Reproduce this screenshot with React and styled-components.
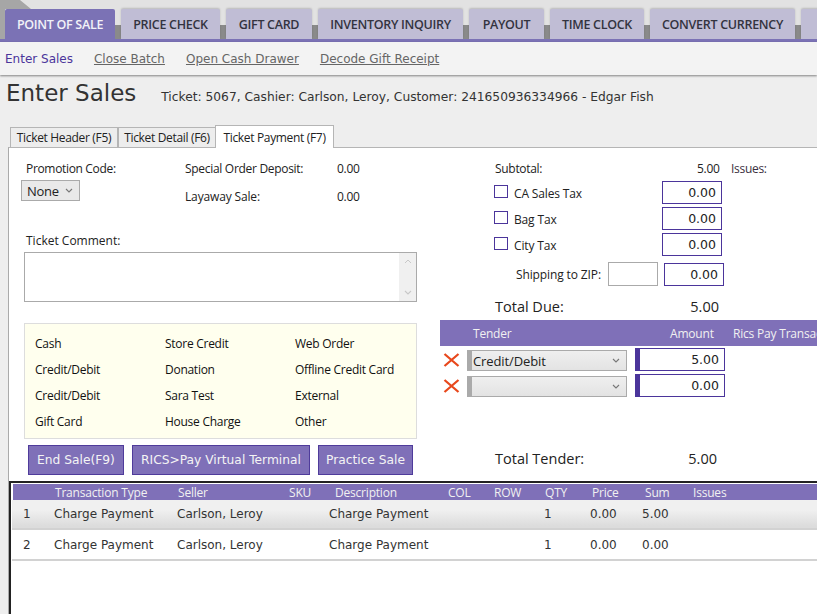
import React from 'react';
import styled, { createGlobalStyle } from 'styled-components';

const Global = createGlobalStyle`
  html, body { margin: 0; padding: 0; background: #eeeeee; }
  * { box-sizing: border-box; }
`;
const ui = `"Open Sans", "Noto Sans", sans-serif`;
const verd = `"DejaVu Sans", Verdana, sans-serif`;

const Page = styled.div`
  width: 817px; height: 614px; overflow: hidden; display: flex; flex-direction: column;
  background: #eeeeee; font-family: ${ui}; color: #222;
`;
const TopBar = styled.div`
  position: relative; height: 42px; flex: none; padding: 9px 0 0 5px; display: flex; gap: 6px;
  background: linear-gradient(#e2e2e2 0, #e2e2e2 25px, #8a8a8a 25px);
  border-bottom: 3px solid #7b72b5; overflow: hidden; white-space: nowrap;
`;
const Corner = styled.div`
  position: absolute; left: 0; top: 0; width: 32px; height: 39px;
  background: #a6a6a6; clip-path: polygon(0 0, 20px 0, 31px 9px, 5px 9px, 5px 39px, 0 39px);
`;
const MainTab = styled.div`
  position: relative; flex: none; width: ${p => p.$w}px; height: 30px; display: flex; align-items: center; justify-content: center;
  font: 600 12.5px ${ui}; letter-spacing: -0.3px;
  background: ${p => p.$active ? '#7b72b5' : '#c0bdd5'};
  color: ${p => p.$active ? '#f2f2f8' : '#33333f'};
  border-radius: 2px 2px 0 0;
  box-shadow: ${p => p.$active ? 'none' : '0 -1px 2px rgba(0,0,0,.18)'};
`;
const SubNav = styled.div`
  height: 33px; flex: none; background: #f3f3f3; display: flex; align-items: center; padding: 0 0 0 5px; gap: 21px;
  font: 12px ${verd}; box-shadow: 0 1px 2px rgba(0,0,0,.45); position: relative;
`;
const SubActive = styled.span` color: #4b359b; `;
const SubLink = styled.a` color: #666; text-decoration: underline; `;
const TitleRow = styled.div`
  height: 50px; flex: none; display: flex; align-items: baseline; padding: 5px 0 0 6px; gap: 25px;
`;
const Title = styled.h1` margin: 0; font: 400 23px ${verd}; color: #333; `;
const Info = styled.span` font: 12.25px ${verd}; color: #333; `;
const TabStrip = styled.div`
  height: 23px; flex: none; display: flex; align-items: flex-end; padding-left: 10px; position: relative; z-index: 1; margin-bottom: -1px;
`;
const SecTab = styled.div`
  height: ${p => p.$active ? 23 : 21}px; width: ${p => p.$w}px; display: flex; align-items: center; justify-content: center;
  font: 12px ${ui}; letter-spacing: -0.33px; color: #222; background: ${p => p.$active ? '#fff' : '#ededed'};
  border: 1px solid #b5b5b5; border-bottom: ${p => p.$active ? 'none' : '1px solid #b5b5b5'};
  margin-left: ${p => p.$active ? -1 : 0}px;
`;
const Panel = styled.div`
  flex: 1; min-height: 0; margin-left: 8px; background: #fff; border-left: 1px solid #aaa; border-top: 1px solid #b5b5b5;
  display: flex; flex-direction: column;
`;
const Form = styled.div` height: 333px; flex: none; display: flex; `;
const LeftCol = styled.div` width: 431px; flex: none; padding: 12px 0 0 15px; display: flex; flex-direction: column; `;
const TopFields = styled.div` display: flex; height: 69px; `;
const Promo = styled.div` width: 161px; flex: none; padding-left: 2px; `;
const Label = styled.div` font: 12px/17px ${ui}; color: #222; letter-spacing: ${p => p.$sp ?? -0.33}px; `;
const PromoSelect = styled.div`
  margin: 3px 0 0 -5px; width: 59px; height: 21px; border: 1px solid #aaa; background: #e9e9e9; display: flex; align-items: center; justify-content: space-between;
  padding: 0 6px 0 5px; font: 13px ${ui}; letter-spacing: -0.3px; color: #222;
`;
const Chevron = ({ c = '#777' }) => (
  <svg width="8" height="5" viewBox="0 0 8 5"><path d="M1 1l3 3 3-3" fill="none" stroke={c} strokeWidth="1.1" /></svg>
);
const Deposit = styled.div` display: grid; grid-template-columns: 152px 40px; grid-auto-rows: 28px; `;
const Plain = styled.div` font: 12px/17px ${ui}; letter-spacing: ${p => p.$sp ?? -0.3}px; color: #222; `;
const CommentLabel = styled(Label)` padding-left: 2px; margin-top: 3px; `;
const Comment = styled.div`
  margin-top: 3px; width: 393px; height: 50px; border: 1px solid #aaa; background: #fff; display: flex; justify-content: flex-end;
`;
const ScrollTrack = styled.div`
  width: 17px; background: #f0f0f0; display: flex; flex-direction: column; align-items: center; justify-content: space-between; padding: 6px 0;
`;
const TenderBox = styled.div`
  margin-top: 21px; width: 393px; height: 116px; border: 1px solid #ddd; background: #ffffee; padding: 6px 0 0 10px;
  display: grid; grid-template-columns: repeat(3, 130px); grid-auto-rows: 26px; align-items: center;
`;
const TenderName = styled.div` font: 12px ${ui}; letter-spacing: -0.27px; color: #111; `;
const Buttons = styled.div` margin-top: 6px; padding-left: 4px; display: flex; gap: 8px; `;
const Btn = styled.div`
  width: ${p => p.$w}px; height: 30px; background: #7f70b8; border: 1px solid #4f3b9b; color: #f4f4f4;
  display: flex; align-items: center; justify-content: center; font: 12.25px ${verd};
`;
const RightCol = styled.div` flex: 1; min-width: 0; padding-top: 12px; display: flex; flex-direction: column; `;
const SumBlock = styled.div` padding-left: 55px; height: 160px; display: flex; flex-direction: column; `;
const SubRow = styled.div` display: flex; height: 17px; font: 12px/17px ${ui}; letter-spacing: -0.3px; `;
const SubLabel = styled.span` width: 202px; `;
const SubValue = styled.span` width: 22px; text-align: right; `;
const Issues = styled.span` margin-left: 12px; color: #3a3040; `;
const TaxRow = styled.label`
  display: flex; align-items: center; height: 23px; margin-bottom: 3px; margin-left: -1px;
  &:first-of-type { margin-top: 4px; }
`;
const Check = styled.span` width: 14px; height: 13px; border: 1px solid #4b359b; background: #fff; margin: -2px 6px 0 0; flex: none; `;
const TaxName = styled.span` width: 148px; font: 12px ${ui}; letter-spacing: -0.15px; padding-top: 1px; `;
const Amount = styled.div`
  width: ${p => p.$w || 60}px; height: 23px; border: 1px solid #4b359b; ${p => p.$bar ? 'border-left-width: 5px;' : ''}
  font: 12.5px ${verd}; color: #222; display: flex; align-items: center; justify-content: flex-end; padding-right: 5px; background: #fff; flex: none;
`;
const ShipRow = styled.div` display: flex; align-items: center; height: 25px; margin: 3px 0 0 21px; `;
const ShipLabel = styled.span` width: 92px; font: 12px ${ui}; letter-spacing: -0.12px; `;
const Zip = styled.div` width: 50px; height: 24px; border: 1px solid #aaa; margin: -1px 6px 0 0; flex: none; `;
const TotalRow = styled.div` display: flex; align-items: center; height: 22px; margin-top: 8px; font: 14.5px ${ui}; color: #222; `;
const TotalLabel = styled.span` width: ${p => p.$w}px; flex: none; `;
const TotalValue = styled.span` width: ${p => p.$w}px; text-align: right; flex: none; `;
const TenderHead = styled.div`
  height: 26px; flex: none; background: #7f70b8; color: #f1f1f1; display: grid; grid-template-columns: 33px 197px 63px 1fr; align-items: center; font: 12px ${ui}; letter-spacing: -0.2px; white-space: nowrap; overflow: hidden;
`;
const TenderRow = styled.div` display: flex; align-items: center; height: 23px; margin-top: ${p => p.$first ? 2 : 3}px; padding-left: 3px; `;
const Xmark = () => (
  <svg width="17" height="14" viewBox="0 0 17 14" style={{ flex: 'none' }}>
    <path d="M1.5 1L15.5 13M15.5 1L1.5 13" stroke="#e8481c" strokeWidth="2.3" fill="none" />
  </svg>
);
const TenderSelect = styled.div`
  margin: 2px 0 0 7px; width: 160px; height: 21px; flex: none; border: 1px solid #aaa; border-left-width: 5px; background: linear-gradient(#efefef, #e3e3e3);
  display: flex; align-items: center; justify-content: space-between; padding: 0 6px 0 1px; font: 13px ${ui}; letter-spacing: -0.1px; color: #222;
`;
const AmountSlot = styled.div` margin-left: 8px; `;
const TotalTender = styled(TotalRow)` margin: 50px 0 0 55px; `;
const Grid = styled.div`
  flex: 1; min-height: 0; background: #fff; border-top: 2px solid #222; border-left: 2px solid #222; margin-left: 0; padding: 1px 0 0 2px; position: relative;
`;
const GridHead = styled.div`
  height: 16px; padding-top: 1px; background: #7f70b8; color: #f1f1f1; display: grid; grid-template-columns: 42px 123px 111px 46px 113px 46px 51px 47px 53px 48px 1fr; align-items: center; font: 12px/16px ${ui}; letter-spacing: -0.2px; white-space: nowrap;
`;
const GridRow = styled.div`
  height: ${p => p.$first ? 30 : 31}px; margin-left: -1px; display: grid; grid-template-columns: 42px 123px 111px 41px 119px 46px 50px 46px 52px 1fr; align-items: center; font: 12px ${verd}; color: #333; white-space: nowrap;
  background: ${p => p.$first ? 'linear-gradient(#f0f0f0 0, #f0f0f0 10px, #dcdcdc 26px)' : '#fff'};
  border-bottom: 2px solid #d2d2d2;
`;
const Idx = styled.span` padding-left: 11px; `;

const tabs = [['POINT OF SALE', 110], ['PRICE CHECK', 99], ['GIFT CARD', 86], ['INVENTORY INQUIRY', 145], ['PAYOUT', 75], ['TIME CLOCK', 94], ['CONVERT CURRENCY', 145], ['CUSTOMER', 97]];
const tenders = ['Cash', 'Store Credit', 'Web Order', 'Credit/Debit', 'Donation', 'Offline Credit Card', 'Credit/Debit', 'Sara Test', 'External', 'Gift Card', 'House Charge', 'Other'];
const heads = ['', 'Transaction Type', 'Seller', 'SKU', 'Description', 'COL', 'ROW', 'QTY', 'Price', 'Sum', 'Issues'];

export default function App() {
  return (
    <Page>
      <Global />
      <TopBar>
        <Corner />
        {tabs.map(([t, w], i) => <MainTab key={t} $w={w} $active={i === 0}>{t}</MainTab>)}
      </TopBar>
      <SubNav>
        <SubActive>Enter Sales</SubActive>
        <SubLink>Close Batch</SubLink>
        <SubLink>Open Cash Drawer</SubLink>
        <SubLink>Decode Gift Receipt</SubLink>
      </SubNav>
      <TitleRow>
        <Title>Enter Sales</Title>
        <Info>Ticket: 5067, Cashier: Carlson, Leroy, Customer: 241650936334966 - Edgar Fish</Info>
      </TitleRow>
      <TabStrip>
        <SecTab $w={108}>Ticket Header (F5)</SecTab>
        <SecTab $w={98}>Ticket Detail (F6)</SecTab>
        <SecTab $w={119} $active>Ticket Payment (F7)</SecTab>
      </TabStrip>
      <Panel>
        <Form>
          <LeftCol>
            <TopFields>
              <Promo>
                <Label>Promotion Code:</Label>
                <PromoSelect>None <Chevron /></PromoSelect>
              </Promo>
              <Deposit>
                <Plain>Special Order Deposit:</Plain><Plain>0.00</Plain>
                <Plain $sp={-0.15}>Layaway Sale:</Plain><Plain>0.00</Plain>
              </Deposit>
            </TopFields>
            <CommentLabel $sp={0}>Ticket Comment:</CommentLabel>
            <Comment>
              <ScrollTrack>
                <svg width="8" height="5" viewBox="0 0 8 5"><path d="M1 4l3-3 3 3" fill="none" stroke="#c8c8c8" /></svg>
                <Chevron c="#c8c8c8" />
              </ScrollTrack>
            </Comment>
            <TenderBox>{tenders.map((t, i) => <TenderName key={i}>{t}</TenderName>)}</TenderBox>
            <Buttons>
              <Btn $w={96}>End Sale(F9)</Btn>
              <Btn $w={178}>RICS&gt;Pay Virtual Terminal</Btn>
              <Btn $w={95}>Practice Sale</Btn>
            </Buttons>
          </LeftCol>
          <RightCol>
            <SumBlock>
              <SubRow>
                <SubLabel>Subtotal:</SubLabel><SubValue>5.00</SubValue><Issues>Issues:</Issues>
              </SubRow>
              {['CA Sales Tax', 'Bag Tax', 'City Tax'].map(t => (
                <TaxRow key={t}><Check /><TaxName>{t}</TaxName><Amount>0.00</Amount></TaxRow>
              ))}
              <ShipRow><ShipLabel>Shipping to ZIP:</ShipLabel><Zip /><Amount>0.00</Amount></ShipRow>
              <TotalRow><TotalLabel $w={170}>Total Due:</TotalLabel><TotalValue $w={54}>5.00</TotalValue></TotalRow>
            </SumBlock>
            <TenderHead><span /><span>Tender</span><span>Amount</span><span>Rics Pay Transaction</span></TenderHead>
            <TenderRow $first><Xmark /><TenderSelect>Credit/Debit <Chevron /></TenderSelect><AmountSlot><Amount $w={90} $bar>5.00</Amount></AmountSlot></TenderRow>
            <TenderRow><Xmark /><TenderSelect><span /><Chevron /></TenderSelect><AmountSlot><Amount $w={90} $bar>0.00</Amount></AmountSlot></TenderRow>
            <TotalTender><TotalLabel $w={170}>Total Tender:</TotalLabel><TotalValue $w={52}>5.00</TotalValue></TotalTender>
          </RightCol>
        </Form>
        <Grid>
          <GridHead>{heads.map((h, i) => <span key={i}>{h}</span>)}</GridHead>
          {[['1', '5.00'], ['2', '0.00']].map(([n, s], i) => (
            <GridRow key={n} $first={i === 0}>
              <Idx>{n}</Idx><span>Charge Payment</span><span>Carlson, Leroy</span><span /><span>Charge Payment</span><span /><span />
              <span>1</span><span>0.00</span><span>{s}</span>
            </GridRow>
          ))}
        </Grid>
      </Panel>
    </Page>
  );
}
